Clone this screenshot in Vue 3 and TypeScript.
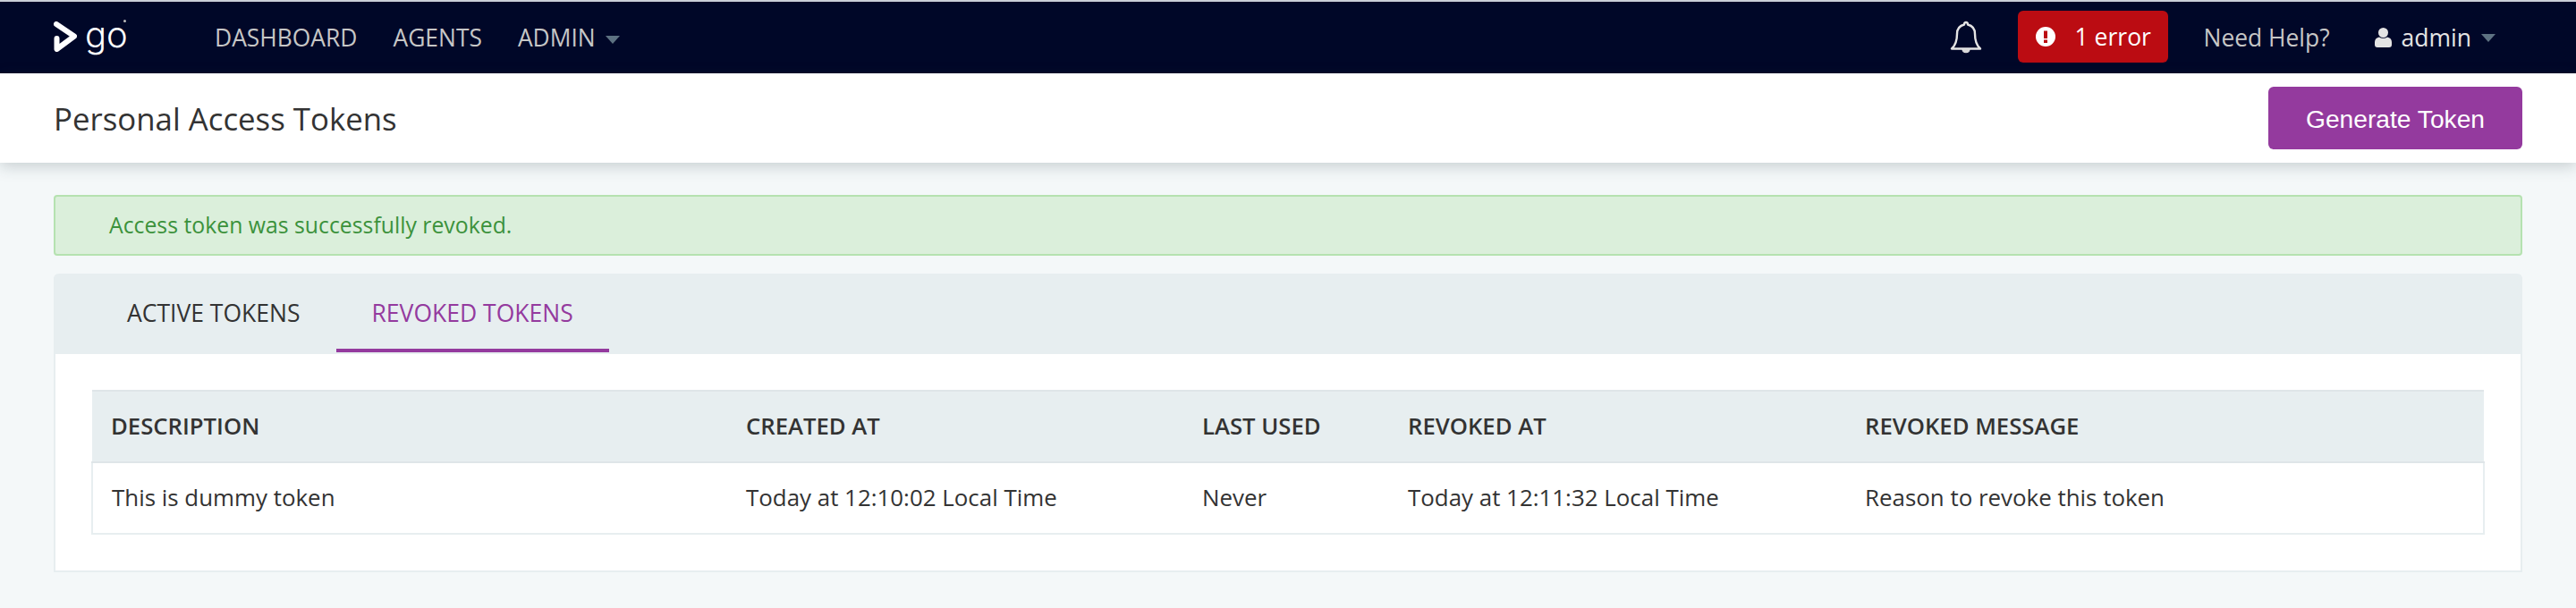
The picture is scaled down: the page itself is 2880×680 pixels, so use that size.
<script setup lang="ts">
import { ref } from 'vue';

interface Column {
  key: string;
  label: string;
}

const activeTab = ref('revoked');

const columns: Column[] = [
  { key: 'description', label: 'Description' },
  { key: 'created', label: 'Created At' },
  { key: 'used', label: 'Last Used' },
  { key: 'revoked', label: 'Revoked At' },
  { key: 'message', label: 'Revoked Message' },
];

const rows: Record<string, string>[] = [
  {
    description: 'This is dummy token',
    created: 'Today at 12:10:02 Local Time',
    used: 'Never',
    revoked: 'Today at 12:11:32 Local Time',
    message: 'Reason to revoke this token',
  },
];
</script>

<template>
  <div class="page">
    <nav class="site-nav">
      <a class="logo">
        <svg class="logo-mark" viewBox="0 0 26 34" width="26" height="34" fill="none" stroke="#fff" stroke-width="6" stroke-linecap="round" stroke-linejoin="round">
          <path d="M3 3 L23 16.5 L3.5 31 L3.5 19" />
        </svg>
        <span class="logo-text">go</span>
        <i class="logo-reg"></i>
      </a>
      <ul class="nav-links">
        <li>Dashboard</li>
        <li>Agents</li>
        <li class="has-caret">Admin<i class="caret"></i></li>
      </ul>
      <div class="nav-right">
        <svg class="bell" viewBox="0 0 36 38" width="36" height="38" fill="none" stroke="#e4e4e4" stroke-width="2.4" stroke-linejoin="round">
          <path d="M18 2 C16.5 2 16 3 16 4.5 C10.5 5.8 8 10 8 15 C8 23 6.5 27.5 2 31.5 L34 31.5 C29.5 27.5 28 23 28 15 C28 10 25.5 5.8 20 4.5 C20 3 19.5 2 18 2 Z" />
          <path d="M14 32 C14.5 37 21.5 37 22 32" fill="#d8d8d8" stroke-width="1.2" />
        </svg>
        <div class="error-badge">
          <svg viewBox="0 0 22 22" width="22" height="22">
            <circle cx="11" cy="11" r="11" fill="#fff" />
            <rect x="9" y="4.5" width="4" height="8.5" fill="#bb0c12" />
            <rect x="9" y="14.5" width="4" height="3.5" fill="#bb0c12" />
          </svg>
          <span>1 error</span>
        </div>
        <a class="help">Need Help?</a>
        <div class="user">
          <svg viewBox="0 0 19 22" width="19" height="22" fill="#e4e4e4">
            <circle cx="9.5" cy="5.5" r="5.5" />
            <path d="M5 10.5 C7 12.2 12 12.2 14 10.5 C17 11 19 13 19 16 L19 19 C19 21 18 22 16 22 L3 22 C1 22 0 21 0 19 L0 16 C0 13 2 11 5 10.5 Z" />
          </svg>
          <span class="user-name">admin</span>
          <i class="caret"></i>
        </div>
      </div>
    </nav>

    <header class="page-header">
      <h1>Personal Access Tokens</h1>
      <button class="primary-btn">Generate Token</button>
    </header>

    <main class="content">
      <div class="alert">Access token was successfully revoked.</div>

      <section class="panel">
        <div class="tabs">
          <a class="tab" :class="{ active: activeTab === 'active' }" @click="activeTab = 'active'">Active Tokens</a>
          <a class="tab" :class="{ active: activeTab === 'revoked' }" @click="activeTab = 'revoked'">Revoked Tokens</a>
        </div>
        <div class="panel-body">
          <table class="tokens">
            <thead>
              <tr>
                <th v-for="col in columns" :key="col.key">{{ col.label }}</th>
              </tr>
            </thead>
            <tbody>
              <tr v-for="(row, i) in rows" :key="i">
                <td v-for="col in columns" :key="col.key">{{ row[col.key] }}</td>
              </tr>
            </tbody>
          </table>
        </div>
      </section>
    </main>
  </div>
</template>

<style>
html,
body {
  margin: 0;
  background: #f4f8f9;
}
</style>

<style scoped>
.page {
  width: 2880px;
  height: 680px;
  overflow: hidden;
  background: #f4f8f9;
  font-family: 'Open Sans', sans-serif;
  color: #333;
}

.site-nav {
  display: flex;
  align-items: center;
  height: 80px;
  border-top: 2px solid #c9ced8;
  background: #000728;
  padding: 0 90px 0 60px;
}

.logo {
  position: relative;
  display: flex;
  align-items: center;
  width: 180px;
  color: #fff;
  margin-top: -2px;
}

.logo-text {
  margin: -4px 0 0 9px;
  font-family: Inter, sans-serif;
  font-size: 40px;
  font-weight: 300;
  line-height: 46px;
}

.logo-reg {
  position: absolute;
  left: 78px;
  top: 2px;
  width: 3px;
  height: 3px;
  border-radius: 50%;
  background: #bbb;
}

.nav-links {
  display: flex;
  gap: 40px;
  margin: 0;
  padding: 0;
  list-style: none;
  font-size: 26.4px;
  color: #c6c6c6;
  text-transform: uppercase;
}

.caret {
  display: inline-block;
  width: 0;
  height: 0;
  margin-left: 11px;
  border-left: 8px solid transparent;
  border-right: 8px solid transparent;
  border-top: 9px solid #5d7282;
  vertical-align: 3px;
}

.nav-right {
  display: flex;
  align-items: center;
  margin-left: auto;
}

.bell {
  margin-right: 40px;
}

.error-badge {
  display: flex;
  align-items: center;
  gap: 22px;
  width: 168px;
  height: 58px;
  box-sizing: border-box;
  padding-left: 20px;
  margin-top: -2px;
  border-radius: 6px;
  background: #bb0c12;
  color: #fff;
  font-size: 26.5px;
}

.help {
  margin-left: 40px;
  font-size: 26.4px;
  color: #c6c6c6;
}

.user {
  display: flex;
  align-items: center;
  margin-left: 50px;
  font-size: 26.5px;
  color: #e4e4e4;
}

.user-name {
  margin-left: 11px;
}

.page-header {
  position: relative;
  display: flex;
  align-items: center;
  justify-content: space-between;
  height: 100px;
  padding: 0 60px;
  background: #fff;
  box-shadow: 0 4px 16px rgba(40, 60, 70, 0.22);
}

.page-header h1 {
  margin: 0;
  font-size: 34.8px;
  font-weight: 400;
  color: #333;
}

.primary-btn {
  width: 284px;
  height: 70px;
  padding-top: 4px;
  border: 0;
  border-radius: 6px;
  background: #943a9e;
  color: #fff;
  font-family: 'Liberation Sans', Arial, sans-serif;
  font-size: 28.2px;
}

.content {
  padding: 36px 60px 0;
}

.alert {
  display: flex;
  align-items: center;
  height: 68px;
  box-sizing: border-box;
  padding: 0 0 2px 60px;
  border: 2px solid #b5e2b0;
  border-radius: 4px;
  background: #dbefdb;
  color: #3c923c;
  font-size: 24.8px;
}

.panel {
  margin-top: 20px;
  border: 2px solid #e7eef0;
  border-top: 0;
  border-radius: 6px 6px 0 0;
  background: #fff;
}

.tabs {
  display: flex;
  height: 90px;
  margin: 0 -2px;
  padding-left: 42px;
  border-radius: 6px 6px 0 0;
  background: #e7eef0;
}

.tab {
  display: flex;
  align-items: center;
  height: 80px;
  padding: 4px 40px 0;
  border-bottom: 4px solid transparent;
  font-size: 26.5px;
  color: #333;
  text-transform: uppercase;
  cursor: pointer;
}

.tab.active {
  border-bottom-color: #943a9e;
  color: #943a9e;
}

.panel-body {
  padding: 40px 40px 40px;
}

.tokens {
  width: 100%;
  table-layout: fixed;
  border-collapse: collapse;
  font-size: 25.9px;
}

.tokens th,
.tokens td {
  box-sizing: border-box;
  padding: 0 21px 3px;
  text-align: left;
}

.tokens th {
  height: 80px;
  padding-bottom: 1px;
  border-top: 2px solid #dfe5e8;
  border-bottom: 2px solid #dfe5e8;
  background: #e7eef0;
  font-size: 25.7px;
  font-weight: 600;
  text-transform: uppercase;
}

.tokens td {
  height: 80px;
  border-bottom: 2px solid #e7eef0;
}

.tokens tbody tr {
  border-left: 2px solid #e7eef0;
  border-right: 2px solid #e7eef0;
}

.tokens th:nth-child(1) { width: 710px; }
.tokens th:nth-child(2) { width: 510px; }
.tokens th:nth-child(3) { width: 230px; }
.tokens th:nth-child(4) { width: 511px; }
</style>
